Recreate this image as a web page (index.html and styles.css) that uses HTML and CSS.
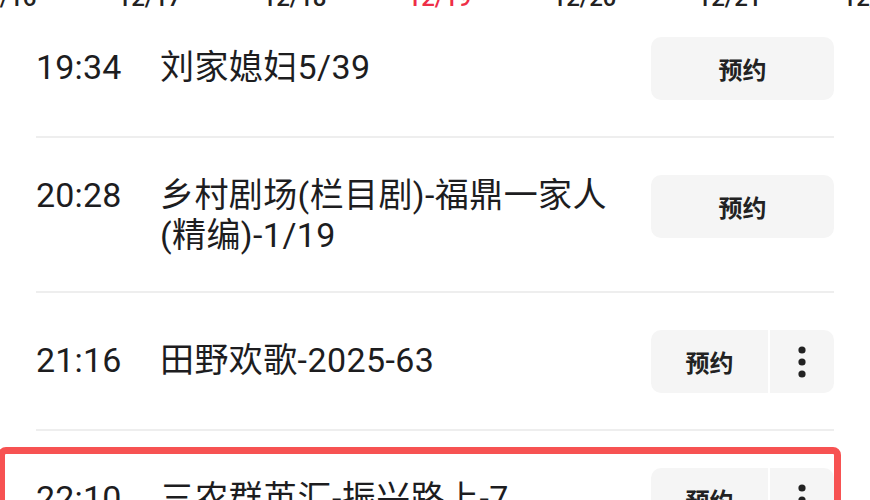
FILE: index.html
```html
<!DOCTYPE html>
<html lang="zh-CN">
<head>
<meta charset="utf-8">
<title>节目单</title>
<link rel="stylesheet" href="styles.css">
</head>
<body>
<div class="dates">
  <span class="date">12/16</span>
  <span class="date">12/17</span>
  <span class="date">12/18</span>
  <span class="date today">12/19</span>
  <span class="date">12/20</span>
  <span class="date">12/21</span>
  <span class="date">12/22</span>
</div>
<ul class="list">
  <li class="row">
    <span class="time">19:34</span>
    <span class="title">刘家媳妇5/39</span>
    <div class="actions"><button class="btn btn-full">预约</button></div>
  </li>
  <li class="row">
    <span class="time">20:28</span>
    <span class="title">乡村剧场(栏目剧)-福鼎一家人(精编)-1/19</span>
    <div class="actions"><button class="btn btn-full">预约</button></div>
  </li>
  <li class="row">
    <span class="time">21:16</span>
    <span class="title">田野欢歌-2025-63</span>
    <div class="actions">
      <button class="btn btn-main">预约</button>
      <button class="btn btn-more" aria-label="更多">
        <svg width="8" height="32" viewBox="0 0 8 32"><circle cx="4" cy="4" r="3.6" fill="#222"/><circle cx="4" cy="16" r="3.6" fill="#222"/><circle cx="4" cy="28" r="3.6" fill="#222"/></svg>
      </button>
    </div>
  </li>
  <li class="row highlighted">
    <span class="time">22:10</span>
    <span class="title">三农群英汇-振兴路上-7</span>
    <div class="actions">
      <button class="btn btn-main">预约</button>
      <button class="btn btn-more" aria-label="更多">
        <svg width="8" height="32" viewBox="0 0 8 32"><circle cx="4" cy="4" r="3.6" fill="#222"/><circle cx="4" cy="16" r="3.6" fill="#222"/><circle cx="4" cy="28" r="3.6" fill="#222"/></svg>
      </button>
    </div>
    <div class="mark"></div>
  </li>
</ul>
</body>
</html>
```
FILE: styles.css
```css
* { box-sizing: border-box; }
html, body {
  margin: 0;
  padding: 0;
  background: #ffffff;
  overflow: hidden;
  height: 500px;
}
body {
  font-family: Roboto, "Noto Sans CJK SC", sans-serif;
  color: #1d1d1f;
}
.dates {
  display: grid;
  grid-template-columns: repeat(7, 145px);
  margin-left: -68px;
  height: 30px;
  margin-top: -20px;
  margin-bottom: -10px;
  align-items: end;
}
.date {
  text-align: center;
  font-size: 24px;
  line-height: 24px;
  font-weight: 500;
  color: #222;
}
.date.today { color: #ee2e47; }
.list {
  list-style: none;
  margin: 0;
  padding: 0 36px;
}
.row {
  position: relative;
  display: flex;
  align-items: baseline;
  padding: 37px 0 36px;
  border-bottom: 2px solid #eeeeee;
}
.time {
  flex: 0 0 124px;
  font-size: 34px;
  line-height: 40px;
  letter-spacing: 0.2px;
}
.title {
  flex: 1;
  min-height: 63px;
  display: flex;
  align-items: center;
  font-size: 34px;
  line-height: 40px;
  letter-spacing: 0.4px;
  padding: 0 26px 4px 0;
  margin-bottom: -4px;
}
.actions {
  align-self: flex-start;
  flex: 0 0 183px;
  display: flex;
  gap: 2px;
}
.btn {
  height: 63px;
  border: none;
  background: #f5f5f5;
  font-family: "Noto Sans CJK SC", sans-serif;
  font-size: 24px;
  font-weight: 700;
  color: #222;
  padding: 0;
  display: flex;
  align-items: center;
  justify-content: center;
}
.btn-full { width: 183px; border-radius: 10px; }
.btn-main { width: 117px; border-radius: 10px 0 0 10px; }
.btn-more { width: 64px; border-radius: 0 10px 10px 0; }
.mark {
  position: absolute;
  top: 16px;
  left: -38px;
  right: -7px;
  height: 120px;
  border: 7px solid #f75252;
  border-radius: 8px;
  pointer-events: none;
}
```
